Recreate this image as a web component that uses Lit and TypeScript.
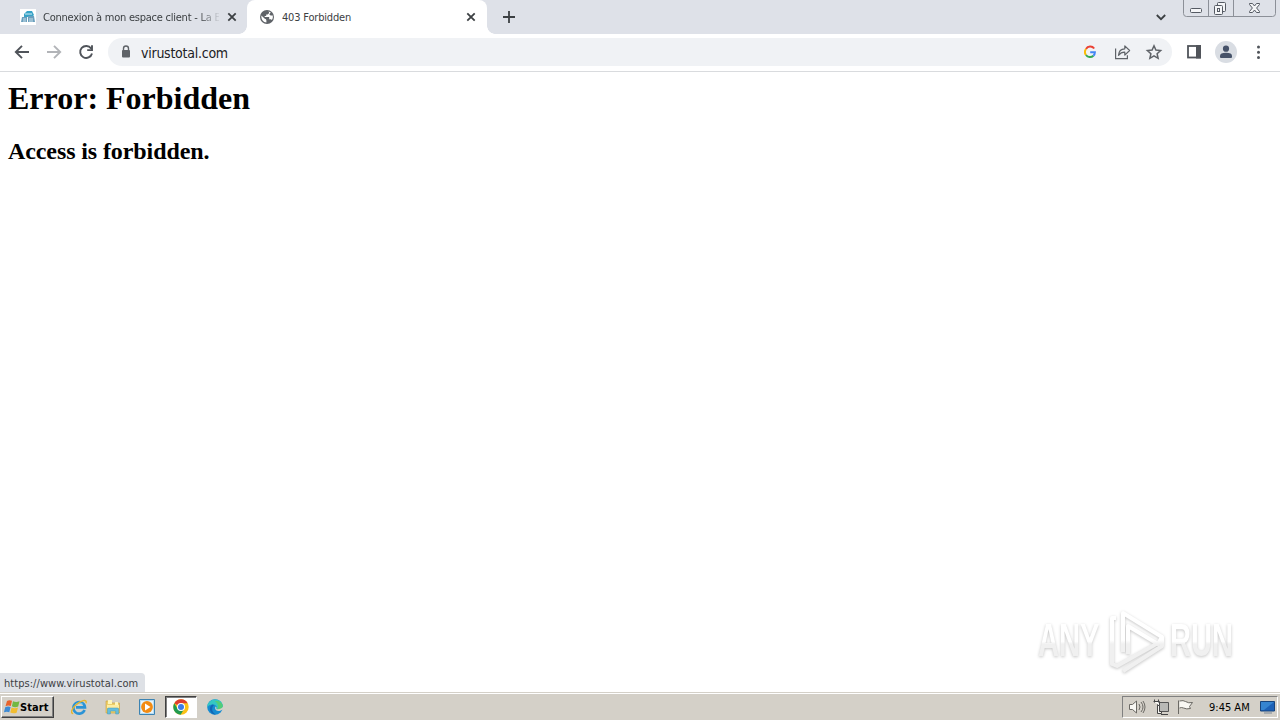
import { LitElement, css, html, svg } from "lit";
import { customElement, property } from "lit/decorators.js";

const globe = svg`
  <circle cx="8" cy="8" r="7" fill="#5f6368" />
  <path d="M2.4 6.6 5.8 9.8q1.6 0 1.6 1.6v2.2C4.5 13.3 2 11 2.4 6.6ZM6 3.4Q7.8 2.2 10 2.6v1.6L8.6 5.4H7.2v1.5H5.7v1.2h4.5v2.1h1.7l1 .8q1.4-2 .9-4.4h-2.2L10.2 5.2l1.6-1.8Q9 1.6 6 3.4Z" fill="#fff" />
`;

const bank = svg`
  <rect width="16" height="16" fill="#fff" />
  <path d="M4 5 7 2h5l2 4-2 2H4Z" fill="#38a3c7" />
  <path d="M5 5h7M3 9h10" stroke="#d5eef5" />
  <path d="M2 8h5v5H1Zm6-1h6l1 6H8Z" fill="#6a9fbd" />
  <path d="M3 10h3m3 0h4M3 12h3m3 0h4" stroke="#e4f0f5" stroke-width=".8" />
`;

const close = svg`<path d="m4.3 4.3 7.4 7.4m0-7.4-7.4 7.4" fill="none" stroke="#3c4043" stroke-width="1.8" />`;

const chrome = svg`
  <circle cx="8" cy="8" r="7.7" fill="#fbc116" />
  <path d="M8 8 1.3 4.15A7.7 7.7 0 0 1 14.7 4.15H8Z" fill="#df3e30" />
  <path d="M1.3 4.15A7.7 7.7 0 0 0 7.6 15.7L11.3 9.8 8 8 4.7 9.9Z" fill="#219b50" />
  <circle cx="8" cy="8" r="4" fill="#fff" />
  <circle cx="8" cy="8" r="3" fill="#3d7ce8" />
`;

const explorer = svg`
  <path d="M13.6 11A5.8 5.8 0 1 1 14 8.4H5" fill="none" stroke="#2b93d6" stroke-width="2.6" />
  <path d="M4.2 6.2c1-2.4 6-3 7.8-.6" fill="none" stroke="#7bd1f4" />
  <path d="M2.2 14.6C-.8 14.2.6 9.7 4.8 6 9.7 1.5 16.4-.5 15 4.2" fill="none" stroke="#e6b52c" stroke-width="1.4" />
`;

const folder = svg`
  <path d="M1 2h5l1 2h7.5v10H1Z" fill="#edcf69" stroke="#c99e3c" stroke-width=".6" />
  <path d="M3 1h4v4H3Zm7 2h3v4h-3Z" fill="#fff6ba" />
  <path d="M2 6h12v3H2Z" fill="#ffeda0" />
  <path d="M2.5 15V10q0-1 1-1h9q1 0 1 1v5h-2.8v-3H5.4v3Z" fill="#65bddd" stroke="#429bb9" stroke-width=".5" />
`;

const player = svg`
  <path d="M.5.5h15v15H.5Z" fill="#b7dcf3" stroke="#3c83b2" />
  <path d="M2 2h12v12H2Z" fill="#e7f5fc" />
  <circle cx="8" cy="8" r="5.9" fill="#f28b13" />
  <path d="m6 4.5 5.5 3.5L6 11.5Z" fill="#fff" />
`;

const edge = svg`
  <circle cx="8" cy="8" r="7.8" fill="#168bd1" />
  <path d="M.5 6C2.6-1.8 15.5-1.4 15.8 7c0 4-5.4 4.5-6.6 3 1.6-2-.2-4.5-3.1-4.6C3.5 5.2 1 6.5.2 8.5Z" fill="#35c6c4" />
  <path d="M7.8 2.1c4-.6 7.8 1.4 8 5.2-.1 3.2-4 3.9-6 3 2.4-1.9 1.2-6-2-8.2Z" fill="#52cd78" />
  <path d="M5.5 5.5C1 7.6 2.5 15.3 8.8 15.7 4.6 13 4.1 8.8 7 6Z" fill="#1265b4" />
  <path d="M8.6 7.6c-1.6 2.6 1 5.2 4.6 4.2l3-1.3V7c-.8 2.8-4.8 3.8-7 2.9.6-.7.5-1.6-.6-2.3Z" fill="#d4d0c8" />
`;

const windowsFlag = svg`
  <path d="M3 2Q5.4.4 8 1.8L6.8 7Q4.2 5.7 1.5 7.2Z" fill="#e8632c" />
  <path d="M9 2.2q2.9 1.3 6.5.1L14.2 7.6q-3.4 1.2-6.3-.3Z" fill="#72b843" />
  <path d="M1.2 8.3q2.8-1.5 5.4-.2L5.3 13.3Q2.7 12-.1 13.4Z" fill="#3e8bd4" />
  <path d="M7.6 8.5q2.9 1.3 6.4.1l-1.4 5.2q-3.4 1.2-6.3-.3Z" fill="#f1bd31" />
`;

@customElement("ui-icon")
export class UiIcon extends LitElement {
  @property({ attribute: false })
  glyph: unknown;

  render() {
    return html`<svg viewBox="0 0 16 16">${this.glyph}</svg>`;
  }

  static styles = css`
    :host {
      display: block;
      flex: none;
      width: 16px;
      height: 16px;
    }
    svg {
      display: block;
      width: 100%;
      height: 100%;
    }
  `;
}

@customElement("tab-strip")
export class TabStrip extends LitElement {
  render() {
    return html`
      <div class="tab first">
        <ui-icon .glyph=${bank}></ui-icon>
        <span class="title fade">Connexion à mon espace client - La B</span>
        <ui-icon .glyph=${close}></ui-icon>
      </div>
      <div class="tab active">
        <ui-icon .glyph=${globe}></ui-icon>
        <span class="title">403 Forbidden</span>
        <ui-icon .glyph=${close}></ui-icon>
      </div>
      <svg class="new" viewBox="0 0 16 16">
        <path d="M8 2v12M2 8h12" stroke="#3c4043" stroke-width="1.8" />
      </svg>
      <svg class="search" viewBox="0 0 16 16">
        <path d="m3.8 6 4.2 4.2L12.2 6" fill="none" stroke="#3c4043" stroke-width="1.8" />
      </svg>
      <svg class="controls" viewBox="0 0 93 17">
        <path d="M.5 0v13.5q0 3 3 3h86q3 0 3-3V0M25.5 0v16M50.5 0v16" fill="none" stroke="#8c9098" />
        <rect x="7.5" y="8.5" width="11" height="4" rx="1" fill="#f4f5f7" stroke="#555a63" />
        <rect x="34.5" y="2.5" width="8" height="9" rx="1" fill="#f4f5f7" stroke="#555a63" />
        <rect x="31.5" y="5.5" width="8" height="9" rx="1" fill="#f4f5f7" stroke="#555a63" />
        <rect x="34.5" y="8.5" width="2" height="3" fill="none" stroke="#555a63" />
        <path d="M66.5 3.5h3l2 2.5 2-2.5h3v1L73.6 8l2.9 3.5v1h-3l-2-2.5-2 2.5h-3v-1L69.4 8l-2.9-3.5Z" fill="#f4f5f7" stroke="#555a63" />
      </svg>
    `;
  }

  static styles = css`
    :host {
      display: flex;
      flex: none;
      height: 34px;
      background: #dee1e8;
      color: #3c4043;
      font: 11px "DejaVu Sans Condensed", "DejaVu Sans", sans-serif;
      font-stretch: condensed;
    }
    .tab {
      position: relative;
      box-sizing: border-box;
      display: flex;
      align-items: center;
      width: 240px;
      height: 34px;
      padding: 0 8px 0 12px;
    }
    .first {
      width: 247px;
      padding: 0 7px 0 20px;
    }
    .active {
      border-radius: 8px 8px 0 0;
      background: #fff;
    }
    .active::before,
    .active::after {
      content: "";
      position: absolute;
      bottom: 0;
      left: -8px;
      width: 8px;
      height: 8px;
      background: radial-gradient(circle at 0 0, transparent 7.5px, #fff 8px);
    }
    .active::after {
      left: 100%;
      background: radial-gradient(circle at 100% 0, transparent 7.5px, #fff 8px);
    }
    .title {
      flex: 1;
      margin-left: 7px;
      overflow: hidden;
      white-space: nowrap;
      letter-spacing: -0.18px;
    }
    .fade {
      flex: none;
      width: 176px;
      margin-right: 5px;
      letter-spacing: -0.24px;
      mask-image: linear-gradient(to right, #000 154px, transparent 178px);
    }
    .new {
      width: 16px;
      height: 16px;
      margin: 9px auto 0 14px;
    }
    .search {
      width: 16px;
      height: 16px;
      margin: 9px 14px 0 0;
    }
    .controls {
      width: 93px;
      height: 17px;
      margin-right: 4px;
    }
  `;
}

@customElement("tool-bar")
export class ToolBar extends LitElement {
  render() {
    return html`
      <svg class="nav" viewBox="0 0 96 32">
        <path d="M29 16H16m6-6.2L15.8 16l6.2 6.2" stroke="#50545a" />
        <path d="M47 16h13m-6-6.2 6.2 6.2-6.2 6.2" stroke="#b2b4b8" />
        <path d="M91.1 12.5a6 6 0 1 0 .9 5M92 9.3v4.8h-4.8" stroke="#50545a" />
      </svg>
      <div class="address">
        <svg class="lock" viewBox="0 0 12 16">
          <path d="M3.5 7V4.5a2.5 2.5 0 0 1 5 0V7" fill="none" stroke="#5f6368" stroke-width="1.4" />
          <rect x="2" y="6" width="8" height="7.5" rx="1" fill="#5f6368" />
        </svg>
        <span class="url">virustotal.com</span>
        <svg class="actions" viewBox="0 0 88 28">
          <g fill="none" stroke-width="2">
            <path d="M10.2 10.5A4.9 4.9 0 0 0 2 11" stroke="#ea4335" />
            <path d="M2 11a5 5 0 0 0 0 6" stroke="#fbbc05" />
            <path d="M2 17a4.9 4.9 0 0 0 7.4.7" stroke="#34a853" />
            <path d="M9.4 17.7q1.5-1.4 1.5-3.4H6.2" stroke="#4285f4" />
          </g>
          <g fill="none" stroke="#5f6368" stroke-width="1.2">
            <path d="M31.6 10.5v10.1h11.8v-3.3" />
            <path d="M34.5 17.3c.3-4.4 2.5-6.4 6.3-6.5V7.9l4.8 4.6-4.8 4.6v-2.9q-3.8-.1-6.3 3.1Z" stroke-linejoin="round" />
            <path d="m70 7.8 1.9 4.3 4.7.5-3.5 3.1 1 4.6-4.1-2.4-4.1 2.4 1-4.6-3.5-3.1 4.7-.5Z" stroke-width="1.5" />
          </g>
        </svg>
      </div>
      <svg class="menu" viewBox="0 0 96 32">
        <rect x="4" y="10" width="12" height="11.5" fill="none" stroke="#50545a" stroke-width="1.8" />
        <path d="M12 9h5v13.5h-5Z" fill="#50545a" />
        <circle cx="42" cy="16" r="11" fill="#d9dde3" />
        <circle cx="42" cy="12.7" r="3.1" fill="#465269" />
        <path d="M36 21v-1.2q0-3 6-3t6 3V21q0 1-1 1H37q-1 0-1-1Z" fill="#465269" />
        <circle cx="74.5" cy="11" r="1.5" fill="#50545a" />
        <circle cx="74.5" cy="16.2" r="1.5" fill="#50545a" />
        <circle cx="74.5" cy="21.4" r="1.5" fill="#50545a" />
      </svg>
    `;
  }

  static styles = css`
    :host {
      display: flex;
      flex: none;
      box-sizing: border-box;
      align-items: center;
      height: 38px;
      padding-bottom: 1px;
      border-bottom: 1px solid #d9dbde;
      background: #fff;
    }
    .nav {
      flex: none;
      width: 96px;
      height: 32px;
      fill: none;
      stroke-width: 1.9;
    }
    .address {
      display: flex;
      flex: none;
      box-sizing: border-box;
      align-items: center;
      width: 1064px;
      height: 28px;
      margin-left: 12px;
      padding-left: 12px;
      border-radius: 14px;
      background: #f0f2f5;
    }
    .lock {
      width: 12px;
      height: 16px;
    }
    .url {
      flex: 1;
      margin-left: 9px;
      padding-top: 2px;
      color: #202124;
      font: 14px "DejaVu Sans Condensed", "DejaVu Sans", sans-serif;
      font-stretch: condensed;
      letter-spacing: -0.25px;
    }
    .actions {
      width: 88px;
      height: 28px;
    }
    .menu {
      width: 96px;
      height: 32px;
      margin-left: 12px;
    }
  `;
}

@customElement("task-bar")
export class TaskBar extends LitElement {
  render() {
    return html`
      <div class="start"><ui-icon .glyph=${windowsFlag}></ui-icon><b>Start</b></div>
      <div class="launch">
        ${[explorer, folder, player, chrome, edge].map(
          (glyph) => html`<div class="app ${glyph === chrome ? "pressed" : ""}"><ui-icon .glyph=${glyph}></ui-icon></div>`
        )}
      </div>
      <div class="tray">
        <svg class="status" viewBox="0 0 74 20">
          <g fill="#f8f7f3" stroke="#6b6964">
            <path d="M6.5 7.5h3l4-3.5v12l-4-3.5h-3Z" />
            <path d="M16 7q2 3 0 6m2-8q4 5 0 10m2-11q4 6 0 12" fill="none" />
            <path d="M34.5 5.5h11v9h-11Z" fill="#b9b9b6" stroke="#555" />
            <path d="M38 17.5h7" stroke="#454545" />
            <path d="M31.5 2.5v3M35.5 2.5v3M30.5 4.5h6v4h-2v8h4v-2h-2v-6" stroke="#454545" />
            <path d="M55.5 17V3.5m1 .5q4-1 6 .5 3 2 7 1l-3 4 1 2q-4 1-7-.5-2-1-4 0" />
          </g>
        </svg>
        <span class="clock">9:45 AM</span>
        <svg class="desktop" viewBox="0 0 17 16">
          <path d="M1.5 2.5h14v9.5h-14Z" fill="#1c61b7" stroke="#17447c" />
          <path d="M2 3h13L5 11H2Z" fill="#3584d0" />
          <path d="M5 14h8" stroke="#7b8796" />
        </svg>
      </div>
    `;
  }

  static styles = css`
    :host {
      display: flex;
      flex: none;
      box-sizing: border-box;
      height: 28px;
      padding: 3px 2px 2px 1px;
      border-top: 1px solid #d4d0c8;
      background: #d4d0c8;
      box-shadow: inset 0 1px #fff;
      color: #000;
      font: 11px "DejaVu Sans Condensed", "DejaVu Sans", sans-serif;
      font-stretch: condensed;
    }
    .start {
      display: flex;
      box-sizing: border-box;
      align-items: center;
      width: 53px;
      height: 22px;
      padding-left: 2px;
      border: 1px solid;
      border-color: #fff #404040 #404040 #fff;
      box-shadow: inset -1px -1px #808080;
    }
    .start b {
      letter-spacing: 0.1px;
    }
    .launch {
      display: flex;
      gap: 2px;
      margin-left: 9px;
    }
    .app {
      display: grid;
      box-sizing: border-box;
      place-items: center;
      width: 32px;
      height: 22px;
    }
    .pressed {
      border: 1px solid;
      border-color: #404040 #fff #fff #404040;
      background: #fff;
      box-shadow: inset 1px 1px #808080;
    }
    .tray {
      display: flex;
      box-sizing: border-box;
      align-items: center;
      width: 156px;
      height: 22px;
      margin-left: auto;
      border: 1px solid;
      border-color: #808080 #fff #fff #808080;
    }
    .status {
      width: 74px;
      height: 20px;
    }
    .clock {
      width: 50px;
      margin-left: 12px;
      white-space: nowrap;
    }
    .desktop {
      width: 17px;
      height: 16px;
    }
  `;
}

@customElement("app-root")
export class AppRoot extends LitElement {
  render() {
    return html`
      <tab-strip></tab-strip>
      <tool-bar></tool-bar>
      <main>
        <h1>Error: Forbidden</h1>
        <h2>Access is forbidden.</h2>
        <div class="link">https://www.virustotal.com</div>
        <div class="watermark">
          <span>ANY</span>
          <svg viewBox="0 0 60 68">
            <defs>
              <linearGradient id="shade" gradientUnits="userSpaceOnUse" x1="0" y1="0" x2="0" y2="68">
                <stop offset=".5" stop-color="#fff" />
                <stop offset=".56" stop-color="#f0f0f0" />
              </linearGradient>
            </defs>
            <g fill="none" stroke="url(#shade)" stroke-width="4" stroke-linejoin="round">
              <path d="M17 46V7l39 24-4 7-30-18v28" />
              <path d="M10 12H6v46l5 2 41-23" />
              <path d="m17 65 39-25v-9" />
            </g>
          </svg>
          <span>RUN</span>
        </div>
      </main>
      <task-bar></task-bar>
    `;
  }

  static styles = css`
    :host {
      display: flex;
      flex-direction: column;
      width: 1280px;
      height: 720px;
      overflow: hidden;
      background: #fff;
    }
    main {
      position: relative;
      flex: 1;
      padding: 8px;
      color: #000;
      font-family: "Liberation Serif", serif;
    }
    h1 {
      margin: 0;
      font-size: 32px;
      line-height: 37px;
    }
    h2 {
      margin: 21px 0 0;
      font-size: 24px;
      line-height: 27px;
      letter-spacing: -0.1px;
    }
    .link {
      position: absolute;
      bottom: 0;
      left: 0;
      box-sizing: border-box;
      width: 145px;
      height: 19px;
      padding-left: 4px;
      border-radius: 0 4px 0 0;
      background: #dee1e6;
      color: #3c4043;
      font: 11px/22px "DejaVu Sans Condensed", "DejaVu Sans", sans-serif;
      font-stretch: condensed;
      letter-spacing: 0.05px;
      white-space: nowrap;
    }
    .watermark {
      position: absolute;
      right: 46px;
      bottom: 18px;
      display: flex;
      align-items: center;
      justify-content: space-between;
      width: 196px;
      height: 68px;
      color: transparent;
      font: bold 47px/70px "Liberation Sans", sans-serif;
      filter: drop-shadow(0 1px 1.5px #c5c5c5);
    }
    .watermark span {
      width: 64px;
      background: linear-gradient(#fff 52%, #f0f0f0 56%);
      background-clip: text;
      -webkit-background-clip: text;
      white-space: nowrap;
    }
    .watermark span {
      flex: none;
      width: 102px;
      margin-right: -38px;
      transform: scaleX(0.62);
      transform-origin: left;
    }
    .watermark svg {
      flex: none;
      width: 60px;
      height: 68px;
    }
  `;
}

declare global {
  interface HTMLElementTagNameMap {
    "app-root": AppRoot;
    "tab-strip": TabStrip;
    "tool-bar": ToolBar;
    "task-bar": TaskBar;
    "ui-icon": UiIcon;
  }
}
